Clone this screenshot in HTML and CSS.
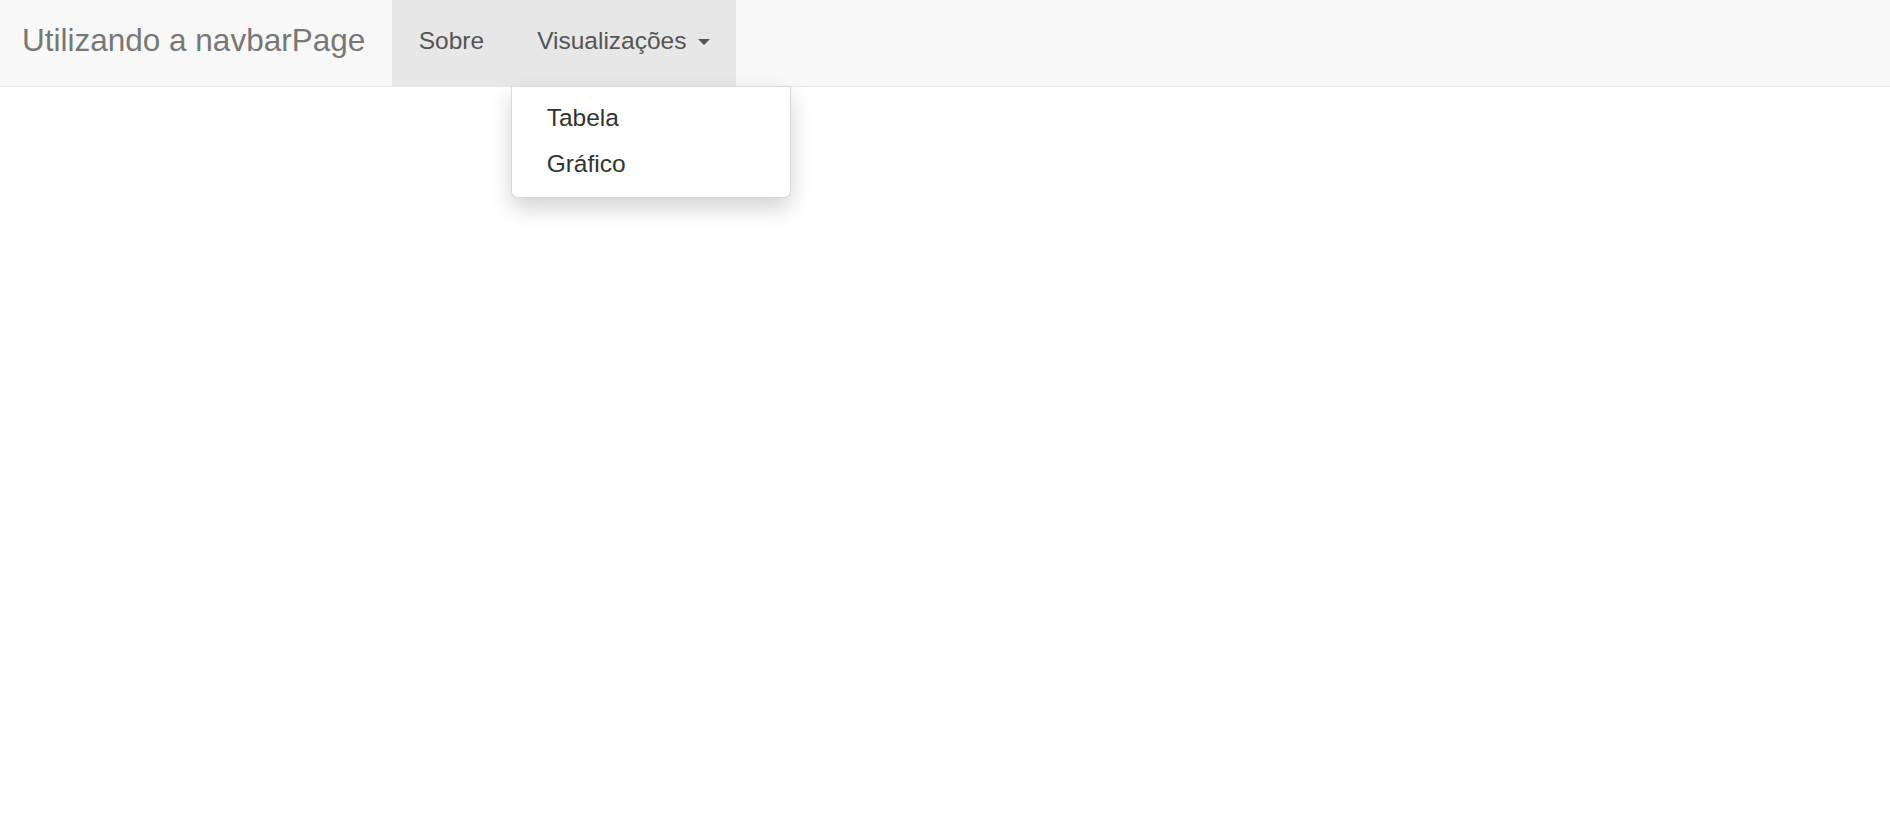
FILE: index.html
```html
<!DOCTYPE html>
<html lang="pt">
<head>
<meta charset="utf-8">
<title>Utilizando a navbarPage</title>
<link rel="stylesheet" href="styles.css">
</head>
<body>
<div class="page">
  <nav class="navbar">
    <span class="brand">Utilizando a navbarPage</span>
    <ul class="nav">
      <li class="nav-item active"><a class="nav-link" href="#">Sobre</a></li>
      <li class="nav-item open">
        <a class="nav-link" href="#">Visualizações <b class="caret"></b></a>
        <div class="menu">
          <a class="menu-item" href="#">Tabela</a>
          <a class="menu-item" href="#">Gráfico</a>
        </div>
      </li>
    </ul>
  </nav>
  <main class="content"></main>
</div>
</body>
</html>
```

FILE: styles.css
```css
html, body {
  margin: 0;
  padding: 0;
  background: #fff;
  height: 100%;
}
body {
  font-family: "Liberation Sans", Arial, Helvetica, sans-serif;
  font-size: 24.5px;
  line-height: 35px;
  color: #333;
}
a {
  text-decoration: none;
}
.page {
  display: flex;
  flex-direction: column;
  min-height: 822px;
}
.content {
  flex: 1;
}
.navbar {
  display: flex;
  align-items: stretch;
  height: 86px;
  flex: none;
  background: #f8f8f8;
  border-bottom: 1px solid #e7e7e7;
  position: relative;
  z-index: 5;
}
.brand {
  font-size: 31.5px;
  line-height: 35px;
  color: #777;
  padding: 23px 27px 0 22px;
  white-space: nowrap;
}
.nav {
  display: flex;
  list-style: none;
  margin: 0;
  padding: 0;
}
.nav-item {
  position: relative;
}
.nav-link {
  display: block;
  height: 86px;
  box-sizing: border-box;
  padding: 23px 26.5px 0;
  color: #777;
  white-space: nowrap;
}
.nav-item.active > .nav-link,
.nav-item.open > .nav-link {
  background: #e7e7e7;
  color: #555;
}
.caret {
  display: inline-block;
  width: 0;
  height: 0;
  margin-left: 4.5px;
  vertical-align: middle;
  border-top: 6.5px solid #555;
  border-left: 6.5px solid transparent;
  border-right: 6.5px solid transparent;
  position: relative;
  top: -1px;
}
.menu {
  position: absolute;
  top: 100%;
  left: 0;
  width: 280px;
  box-sizing: border-box;
  padding: 8px 0 11px;
  background: #fff;
  border: 1px solid rgba(0, 0, 0, 0.15);
  border-radius: 0 0 7px 7px;
  box-shadow: 0 10px 21px rgba(0, 0, 0, 0.175);
  z-index: 10;
}
.menu-item {
  display: block;
  padding: 5.25px 35px;
  color: #333;
  white-space: nowrap;
}
```
